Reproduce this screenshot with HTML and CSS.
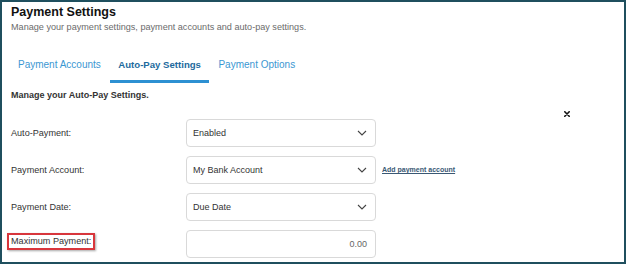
FILE: index.html
```html
<!DOCTYPE html>
<html lang="en">
  <head>
    <meta charset="UTF-8" />
    <title>Payment Settings</title>
    <link rel="stylesheet" href="styles.css">
  </head>
  <body>
    <div class="frame">
      <h1 class="title">Payment Settings</h1>
      <p class="subtitle">Manage your payment settings, payment accounts and auto-pay settings.</p>

      <nav class="tabs">
        <a class="tab">Payment Accounts</a>
        <a class="tab active">Auto-Pay Settings</a>
        <a class="tab">Payment Options</a>
      </nav>

      <h2 class="section-title">Manage your Auto-Pay Settings.</h2>

      <span class="close">
        <svg width="6" height="6" viewBox="0 0 6 6">
          <path d="M0.8 0.8 L5.2 5.2 M5.2 0.8 L0.8 5.2" stroke="#111" stroke-width="1.6" stroke-linecap="round" />
        </svg>
      </span>

      <div class="form">
        <div class="row">
          <label class="label">Auto-Payment:</label>
          <div class="select">
            <span>Enabled</span>
            <svg class="chevron" width="10" height="6" viewBox="0 0 10 6">
              <polyline points="1,1 5,5 9,1" fill="none" stroke="#444" stroke-width="1.1" />
            </svg>
          </div>
        </div>

        <div class="row">
          <label class="label">Payment Account:</label>
          <div class="select">
            <span>My Bank Account</span>
            <svg class="chevron" width="10" height="6" viewBox="0 0 10 6">
              <polyline points="1,1 5,5 9,1" fill="none" stroke="#444" stroke-width="1.1" />
            </svg>
          </div>
          <a class="add-link">Add payment account</a>
        </div>

        <div class="row">
          <label class="label">Payment Date:</label>
          <div class="select">
            <span>Due Date</span>
            <svg class="chevron" width="10" height="6" viewBox="0 0 10 6">
              <polyline points="1,1 5,5 9,1" fill="none" stroke="#444" stroke-width="1.1" />
            </svg>
          </div>
        </div>

        <div class="row">
          <label class="label label-raised"><span class="highlight">Maximum Payment:</span></label>
          <div class="input">0.00</div>
        </div>
      </div>
    </div>
  </body>
</html>
```

FILE: styles.css
```css
* {
  margin: 0;
  padding: 0;
  box-sizing: border-box;
}

body {
  font-family: "Liberation Sans", Arial, sans-serif;
  background: white;
}

.frame {
  position: relative;
  width: 626px;
  height: 264px;
  border: 2px solid #1f4f5e;
  padding: 2px 9px 0;
  overflow: hidden;
  background: white;
}

.title {
  font-size: 12.5px;
  line-height: 16px;
  font-weight: bold;
  color: #111;
}

.subtitle {
  margin-top: 1px;
  font-size: 9.1px;
  line-height: 12px;
  color: #6b6b6b;
}

.tabs {
  display: flex;
  gap: 1.5px;
  margin-top: 25.5px;
  margin-left: -1px;
}

.tab {
  padding: 0 8px 9px;
  font-size: 10px;
  line-height: 12px;
  color: #3b97d2;
  border-bottom: 3px solid transparent;
}

.tab.active {
  font-size: 9.6px;
  color: #1d6a9d;
  font-weight: bold;
  border-bottom-color: #2d90d2;
}

.section-title {
  margin-top: 6px;
  font-size: 9px;
  line-height: 12px;
  font-weight: bold;
  color: #333;
}

.close {
  position: absolute;
  left: 562px;
  top: 109px;
  display: flex;
}

.form {
  display: flex;
  flex-direction: column;
  gap: 9px;
  margin-top: 18.3px;
}

.row {
  display: flex;
  align-items: center;
  height: 28px;
}

.label {
  width: 175px;
  flex-shrink: 0;
  font-size: 9.1px;
  color: #333;
}

.label-raised {
  padding-bottom: 5px;
}

.highlight {
  display: inline-block;
  margin-left: -4px;
  padding: 1px 2px 2px;
  border: 2px solid #d8363c;
  box-shadow: 1px 1px 2px rgba(0, 0, 0, 0.35);
}

.select,
.input {
  width: 190px;
  height: 28px;
  border: 1px solid #d9d9d9;
  border-radius: 4px;
  display: flex;
  align-items: center;
  font-size: 9px;
  color: #333;
}

.select {
  justify-content: space-between;
  padding: 0 8px 0 6px;
}

.chevron {
  margin-top: 1px;
}

.input {
  justify-content: flex-end;
  padding-right: 8px;
  color: #666;
}

.add-link {
  margin-left: 6px;
  font-size: 7px;
  font-weight: bold;
  color: #3a5874;
  text-decoration: underline;
}
```
